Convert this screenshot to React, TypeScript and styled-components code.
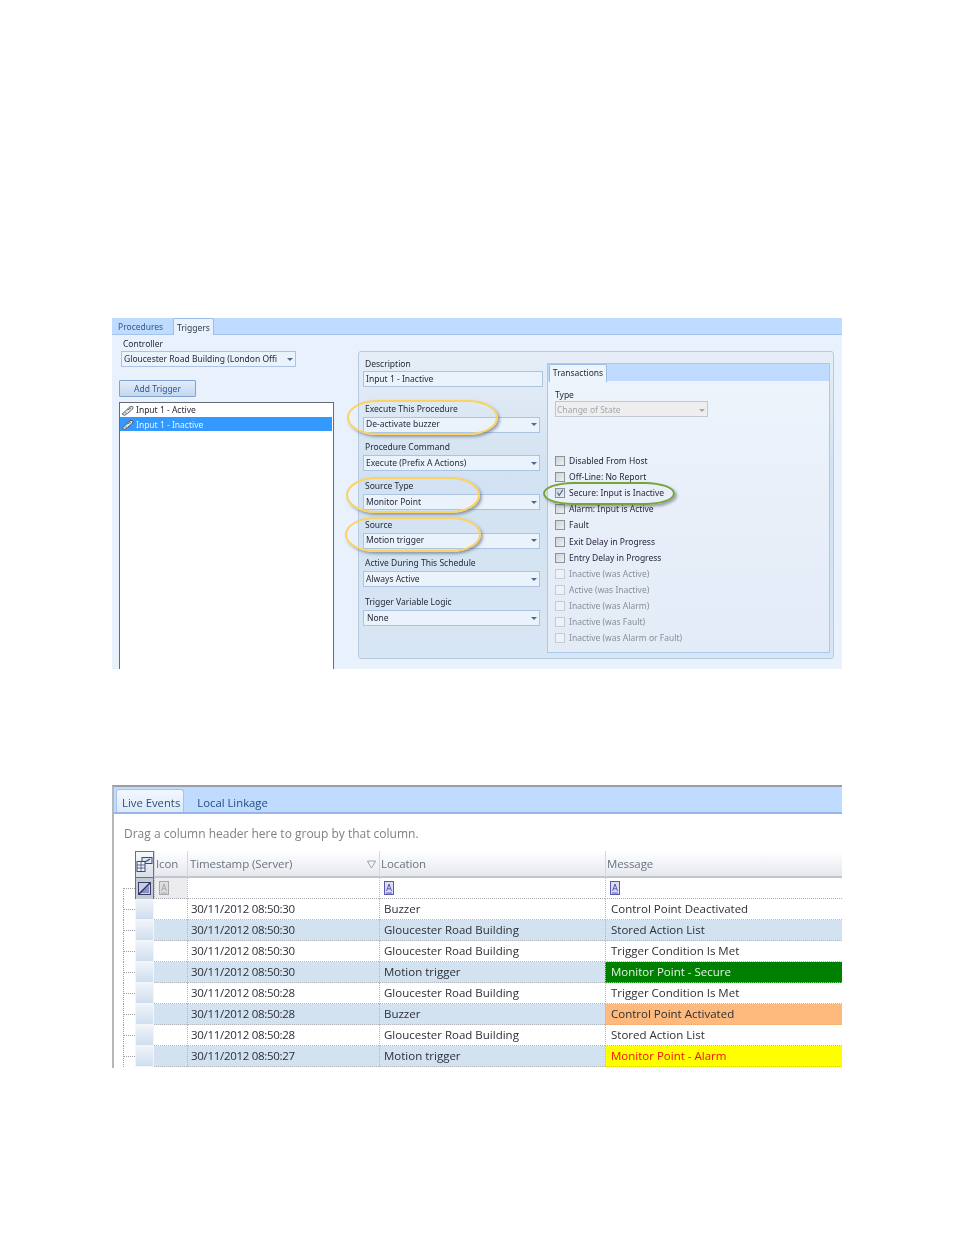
import React from 'react';
import styled, { createGlobalStyle } from 'styled-components';

const GlobalStyle = createGlobalStyle`
  html, body {
    margin: 0;
    background: #ffffff;
  }
`;

const Page = styled.div`
  width: 954px;
  height: 1235px;
  box-sizing: border-box;
  padding: 318px 0 0 112px;
  overflow: hidden;
`;

/* ---------- trigger editor ---------- */

const Editor = styled.section`
  position: relative;
  width: 730px;
  height: 351px;
  overflow: hidden;
  font: 8.5px/10px 'Noto Sans', 'DejaVu Sans', sans-serif;
  color: #1e2530;
  background: #e9f2fc;
  filter: blur(0.35px);
`;

const TabStrip = styled.div`
  display: flex;
  height: 17px;
  box-sizing: border-box;
  background: #bfdbff;
  border-bottom: 1px solid #a3c4ec;
`;

const TopTab = styled.div<{ $active?: boolean; $w: number }>`
  width: ${({ $w }) => $w}px;
  height: 17px;
  box-sizing: border-box;
  padding: 4px 0 0 ${({ $active }) => ($active ? '3px' : '6px')};
  color: ${({ $active }) => ($active ? '#2b3a4d' : '#2f5a8c')};
  background: ${({ $active }) => ($active ? '#e9f2fc' : 'transparent')};
  border: ${({ $active }) => ($active ? '1px solid #9dbde6' : 'none')};
  border-bottom: none;
  margin-left: ${({ $active }) => ($active ? '1px' : '0')};
  border-radius: 2px 2px 0 0;
`;

const EditorBody = styled.div`
  display: flex;
  height: 334px;
`;

const LeftColumn = styled.div`
  display: flex;
  flex-direction: column;
  width: 246px;
  flex: none;
  padding: 4px 0 0 7px;
  box-sizing: border-box;
`;

const ControllerLabel = styled.div`
  margin-left: 4px;
  height: 12px;
`;

const SelectBox = styled.div<{ $w?: number; $disabled?: boolean; $indent?: number }>`
  display: flex;
  align-items: center;
  justify-content: space-between;
  width: ${({ $w }) => ($w ? `${$w}px` : '100%')};
  height: 16px;
  box-sizing: border-box;
  padding: ${({ $disabled }) => ($disabled ? '1px' : '0')} 2px ${({ $disabled }) => ($disabled ? '0' : '1px')} ${({ $indent }) => $indent ?? 2}px;
  white-space: nowrap;
  overflow: hidden;
  background: ${({ $disabled }) => ($disabled ? '#eeeeee' : '#eaf2fc')};
  border: 1px solid ${({ $disabled }) => ($disabled ? '#c4c8cc' : '#acc4e2')};
  color: ${({ $disabled }) => ($disabled ? '#a4a8ac' : '#262b3a')};
`;

const Caret = styled.span<{ $disabled?: boolean }>`
  flex: none;
  width: 0;
  height: 0;
  margin: 1px 0 0 4px;
  border-left: 3px solid transparent;
  border-right: 3px solid transparent;
  border-top: 3px solid ${({ $disabled }) => ($disabled ? '#a8a8a8' : '#4a6a9a')};
`;

const ControllerSelect = styled(SelectBox)`
  margin-left: 2px;
`;

const AddButton = styled.div`
  width: 77px;
  height: 17px;
  box-sizing: border-box;
  margin-top: 13px;
  padding-top: 3px;
  text-align: center;
  color: #2d5a94;
  background: linear-gradient(#e2ecf8, #c3d7ef);
  border: 1px solid #7fa2cf;
  border-radius: 1px;
`;

const TriggerList = styled.div`
  flex: 1;
  width: 215px;
  margin-top: 5px;
  box-sizing: border-box;
  background: #ffffff;
  border: 1px solid #666c74;
  border-bottom: none;
`;

const TriggerRow = styled.div<{ $selected?: boolean }>`
  display: flex;
  align-items: center;
  gap: 2px;
  height: 14px;
  padding: ${({ $selected }) => ($selected ? '1px' : '0')} 0 0 1px;
  box-sizing: border-box;
  margin-right: 1px;
  background: ${({ $selected }) => ($selected ? '#3399ff' : 'transparent')};
  color: ${({ $selected }) => ($selected ? '#e8f2ff' : '#262b3a')};
`;

const GroupPanel = styled.div`
  display: flex;
  align-items: flex-start;
  width: 476px;
  height: 308px;
  margin-top: 16px;
  box-sizing: border-box;
  background: linear-gradient(#e6edf7, #d2e2f2 40%, #d8e6f4);
  border: 1px solid #b6cbe2;
  border-radius: 3px;
`;

const Fields = styled.div`
  width: 180px;
  flex: none;
  margin: 6px 0 0 4px;
  display: flex;
  flex-direction: column;
  gap: 8.7px;
`;

const Field = styled.div<{ $spaced?: boolean }>`
  margin-bottom: ${({ $spaced }) => ($spaced ? '7px' : '0')};
`;

const FieldLabel = styled.div`
  height: 12px;
  box-sizing: border-box;
  padding: 1px 0 0 2px;
`;

const DescriptionInput = styled(SelectBox)`
  margin-top: 1px;
`;

const FieldSelect = styled(SelectBox)`
  width: 177px;
  margin-top: 2px;
`;

const TransactionsPanel = styled.div`
  width: 283px;
  height: 290px;
  margin: 11px 0 0 4px;
  flex: none;
  box-sizing: border-box;
  background: linear-gradient(#eef4fc, #e3ebf7);
  border: 1px solid #a9c8ee;
`;

const InnerTabStrip = styled.div`
  height: 17px;
  background: #bfdbff;
  padding-left: 1px;
`;

const InnerTab = styled.div`
  width: 58px;
  height: 18px;
  box-sizing: border-box;
  padding-top: 3px;
  text-align: center;
  background: #eef4fc;
  border: 1px solid #9dbde6;
  border-bottom: none;
  border-radius: 2px 2px 0 0;
`;

const TransactionsBody = styled.div`
  padding: 8px 0 0 7px;
`;

const TypeLabel = styled.div`
  height: 12px;
  box-sizing: border-box;
  padding-top: 1px;
`;

const CheckList = styled.div`
  margin-top: 36px;
  display: grid;
  grid-auto-rows: 16.1px;
`;

const CheckRow = styled.div<{ $muted?: boolean }>`
  display: flex;
  align-items: center;
  gap: 4px;
  color: ${({ $muted }) => ($muted ? '#8a8e96' : '#231f36')};
`;

const CheckBox = styled.span<{ $muted?: boolean }>`
  flex: none;
  display: flex;
  width: 10px;
  height: 10px;
  box-sizing: border-box;
  background: ${({ $muted }) => ($muted ? '#eef1f6' : 'linear-gradient(135deg, #cfd2d6, #eef0f3)')};
  border: 1px solid ${({ $muted }) => ($muted ? '#c8ccd2' : '#8e9297')};
`;

const Oval = styled.div<{ $x: number; $y: number; $w: number; $h: number; $green?: boolean }>`
  position: absolute;
  left: ${({ $x }) => $x}px;
  top: ${({ $y }) => $y}px;
  width: ${({ $w }) => $w}px;
  height: ${({ $h }) => $h}px;
  box-sizing: border-box;
  border: 2px solid ${({ $green }) => ($green ? '#76a53a' : '#fbd364')};
  border-radius: 30px / 50%;
  box-shadow: 2px 2px 3px rgba(70, 80, 95, 0.5);
  pointer-events: none;
`;

/* ---------- live events ---------- */

const EventsPanel = styled.section`
  width: 730px;
  height: 283px;
  margin-top: 116px;
  box-sizing: border-box;
  overflow: hidden;
  font: 11.5px/16px 'Open Sans', 'Noto Sans', sans-serif;
  color: #33383f;
  background: #ffffff;
  border-top: 2px solid #9b9fa5;
  border-left: 2px solid #b4b7bb;
  filter: blur(0.35px);
`;

const EventsTabs = styled.div`
  display: flex;
  align-items: flex-end;
  height: 27px;
  box-sizing: border-box;
  padding-left: 2px;
  background: #bfdbff;
  border-bottom: 2px solid #95b8e8;
`;

const EventTab = styled.div<{ $active?: boolean }>`
  height: 23px;
  box-sizing: border-box;
  padding: 5px 3px 0 5px;
  margin-right: 7px;
  white-space: nowrap;
  font-size: 11.3px;
  color: ${({ $active }) => ($active ? '#2d4f74' : '#1f4d80')};
  background: ${({ $active }) => ($active ? 'linear-gradient(#f3f8ff, #dbe8f8)' : 'transparent')};
  border: ${({ $active }) => ($active ? '1px solid #a5c4ec' : '1px solid transparent')};
  border-bottom: none;
  border-radius: 3px 3px 0 0;
`;

const GroupHint = styled.div`
  height: 37px;
  box-sizing: border-box;
  padding: 12px 0 0 10px;
  font-size: 12px;
  color: #7e8186;
`;

const COLUMNS = '21px 19px 33px 192px 226px 1fr';

const HeaderRow = styled.div`
  display: grid;
  grid-template-columns: ${COLUMNS};
  height: 27px;
`;

const HeaderCell = styled.div<{ $spread?: boolean }>`
  display: flex;
  align-items: center;
  justify-content: ${({ $spread }) => ($spread ? 'space-between' : 'flex-start')};
  padding: 1px 3px 0 ${({ $spread }) => ($spread ? '2px' : '1px')};
  letter-spacing: -0.1px;
  color: #6a7480;
  background: linear-gradient(#ffffff, #e4e8ee);
  border-left: 1px solid #d4d8de;
  border-bottom: 2px solid #c2c6cc;
`;

const ChooserCell = styled.div`
  display: flex;
  align-items: center;
  justify-content: center;
  background: linear-gradient(#f6f8fb, #d8dfe8);
  border: 1px solid #6c7078;
`;

const FilterRow = styled.div`
  display: grid;
  grid-template-columns: ${COLUMNS};
  height: 21px;
`;

const FilterCell = styled.div<{ $tinted?: boolean }>`
  display: flex;
  align-items: center;
  padding-left: 4px;
  background: ${({ $tinted }) => ($tinted ? '#ececee' : 'transparent')};
  border-left: 1px dotted #b8bcc2;
  border-bottom: 1px dotted #a8acb2;
`;

const ClearCell = styled.div`
  display: flex;
  align-items: center;
  justify-content: center;
  background: #c6cbd3;
  border-left: 1px solid #6c7078;
  border-right: 1px solid #6c7078;
`;

const Gutter = styled.div<{ $first?: boolean }>`
  position: relative;
  margin-left: 9px;

  &::before {
    content: '';
    position: absolute;
    left: 0;
    top: ${({ $first }) => ($first ? '10px' : '0')};
    bottom: 0;
    border-left: 1px dotted #9a9ea4;
  }

  &::after {
    content: '';
    position: absolute;
    left: 0;
    right: 0;
    top: 10px;
    border-top: 1px dotted #9a9ea4;
  }
`;

const EventRow = styled.div`
  display: grid;
  grid-template-columns: ${COLUMNS};
  height: 21px;
`;

const RowHandle = styled.div`
  background: linear-gradient(#eef3f9, #cfdeee);
  border: 1px solid #f2f5f9;
`;

const IconCell = styled.div<{ $alt?: boolean }>`
  background: ${({ $alt }) => ($alt ? '#d3e2f1' : '#ffffff')};
  border-bottom: 1px dotted #b4b8be;
`;

const TextCell = styled.div<{ $alt?: boolean }>`
  padding: 2px 0 0 4px;
  white-space: nowrap;
  overflow: hidden;
  color: #2c2f36;
  background: ${({ $alt }) => ($alt ? '#d3e2f1' : '#ffffff')};
  border-left: 1px dotted #b4b8be;
  border-bottom: 1px dotted #b4b8be;
`;

const TimeCell = styled(TextCell)`
  padding-left: 3px;
  letter-spacing: -0.3px;
`;

const MessageCell = styled(TextCell)<{ $bg?: string; $fg?: string }>`
  padding-left: 5px;
  background: ${({ $bg, $alt }) => $bg ?? ($alt ? '#d3e2f1' : '#ffffff')};
  color: ${({ $fg }) => $fg ?? '#2c2f36'};
`;

/* ---------- drawn icons ---------- */

const LinkIcon = ({ light }: { light?: boolean }) => (
  <svg width="13" height="11" viewBox="0 0 13 11" fill="none">
    <path d="M1 9 L4 6.5 L6.5 8.5 L3.5 10.5 Z" fill="#c8ccd2" stroke="#55595f" strokeWidth="0.8" />
    <path d="M4 6.5 L8 2.5 C9.5 1 12.5 1 12 3 C11.5 4.5 9.5 6 6.5 8.5" fill={light ? '#dfe6f0' : '#e4e6e8'} stroke={light ? '#40464e' : '#5a5e64'} strokeWidth="1" />
    <path d="M6.5 5 L10 3" stroke="#50545a" strokeWidth="0.8" />
  </svg>
);

const ColumnChooserIcon = () => (
  <svg width="17" height="17" viewBox="0 0 17 17" fill="none">
    <rect x="6" y="1.5" width="10" height="6" fill="#dfe6f2" stroke="#3c4a78" />
    <rect x="1" y="5.5" width="8" height="10" fill="#f2f5fa" stroke="#3c4a78" />
    <path d="M1 9 H9 M1 12 H9 M5 6 V15" stroke="#3c4a78" strokeWidth="0.8" />
    <path d="M9 6 L14 3" stroke="#2f4c9c" strokeWidth="1.2" />
  </svg>
);

const ClearFilterIcon = () => (
  <svg width="13" height="13" viewBox="0 0 13 13" fill="none">
    <rect x="0.5" y="0.5" width="12" height="12" fill="#c9cbe8" stroke="#3a3f6a" />
    <path d="M2 11 L11 11 L11 4 Z" fill="#8b8fc4" />
    <path d="M0.5 12.5 L12.5 0.5" stroke="#2b2f5c" strokeWidth="1.4" />
  </svg>
);

const FilterTextIcon = ({ muted }: { muted?: boolean }) => {
  const ink = muted ? '#a8a8a8' : '#5a56b0';
  return (
    <svg width="10" height="14" viewBox="0 0 10 14" fill="none">
      <rect x="0.5" y="0.5" width="9" height="13" fill={muted ? '#dedee0' : '#dcdcf2'} stroke={ink} />
      <path d="M2.5 10 L5 3 L7.5 10 M3.4 7.8 H6.6 M2 12 H8" stroke={ink} />
    </svg>
  );
};

const FunnelIcon = () => (
  <svg width="9" height="9" viewBox="0 0 9 9" fill="none">
    <path d="M0.5 1 H8.5 L5 7.5 H4 Z" fill="#f4f5f7" stroke="#8a8e96" strokeWidth="0.8" />
  </svg>
);

const CheckMark = () => (
  <svg width="8" height="8" viewBox="0 0 8 8" fill="none">
    <path d="M1.5 3.5 L3.2 6.5 L6.8 0.8" stroke="#3d5f8f" strokeWidth="1.1" />
  </svg>
);

/* ---------- data ---------- */

const fields = [
  { label: 'Execute This Procedure', value: 'De-activate buzzer' },
  { label: 'Procedure Command', value: 'Execute (Prefix A Actions)' },
  { label: 'Source Type', value: 'Monitor Point' },
  { label: 'Source', value: 'Motion trigger' },
  { label: 'Active During This Schedule', value: 'Always Active' },
  { label: 'Trigger Variable Logic', value: 'None', indent: 3 },
];

const checks = [
  { label: 'Disabled From Host' },
  { label: 'Off-Line: No Report' },
  { label: 'Secure: Input is Inactive', checked: true },
  { label: 'Alarm: Input is Active' },
  { label: 'Fault' },
  { label: 'Exit Delay in Progress' },
  { label: 'Entry Delay in Progress' },
  { label: 'Inactive (was Active)', muted: true },
  { label: 'Active (was Inactive)', muted: true },
  { label: 'Inactive (was Alarm)', muted: true },
  { label: 'Inactive (was Fault)', muted: true },
  { label: 'Inactive (was Alarm or Fault)', muted: true },
];

const events: { time: string; location: string; message: string; bg?: string; fg?: string }[] = [
  { time: '30/11/2012 08:50:30', location: 'Buzzer', message: 'Control Point Deactivated' },
  { time: '30/11/2012 08:50:30', location: 'Gloucester Road Building', message: 'Stored Action List' },
  { time: '30/11/2012 08:50:30', location: 'Gloucester Road Building', message: 'Trigger Condition Is Met' },
  { time: '30/11/2012 08:50:30', location: 'Motion trigger', message: 'Monitor Point - Secure', bg: '#008000', fg: '#e6f2e6' },
  { time: '30/11/2012 08:50:28', location: 'Gloucester Road Building', message: 'Trigger Condition Is Met' },
  { time: '30/11/2012 08:50:28', location: 'Buzzer', message: 'Control Point Activated', bg: '#fdba7c' },
  { time: '30/11/2012 08:50:28', location: 'Gloucester Road Building', message: 'Stored Action List' },
  { time: '30/11/2012 08:50:27', location: 'Motion trigger', message: 'Monitor Point - Alarm', bg: '#ffff00', fg: '#f01010' },
];

export default function App() {
  return (
    <Page>
      <GlobalStyle />
      <Editor>
        <TabStrip>
          <TopTab $w={60}>Procedures</TopTab>
          <TopTab $active $w={41}>Triggers</TopTab>
        </TabStrip>
        <EditorBody>
          <LeftColumn>
            <ControllerLabel>Controller</ControllerLabel>
            <ControllerSelect $w={175}>
              Gloucester Road Building (London Offi
              <Caret />
            </ControllerSelect>
            <AddButton>Add Trigger</AddButton>
            <TriggerList>
              <TriggerRow>
                <LinkIcon />
                Input 1 - Active
              </TriggerRow>
              <TriggerRow $selected>
                <LinkIcon light />
                Input 1 - Inactive
              </TriggerRow>
            </TriggerList>
          </LeftColumn>
          <GroupPanel>
            <Fields>
              <Field $spaced>
                <FieldLabel>Description</FieldLabel>
                <DescriptionInput>Input 1 - Inactive</DescriptionInput>
              </Field>
              {fields.map((f) => (
                <Field key={f.label}>
                  <FieldLabel>{f.label}</FieldLabel>
                  <FieldSelect $indent={f.indent}>
                    {f.value}
                    <Caret />
                  </FieldSelect>
                </Field>
              ))}
            </Fields>
            <TransactionsPanel>
              <InnerTabStrip>
                <InnerTab>Transactions</InnerTab>
              </InnerTabStrip>
              <TransactionsBody>
                <TypeLabel>Type</TypeLabel>
                <SelectBox $w={153} $disabled $indent={1}>
                  Change of State
                  <Caret $disabled />
                </SelectBox>
                <CheckList>
                  {checks.map((c) => (
                    <CheckRow key={c.label} $muted={c.muted}>
                      <CheckBox $muted={c.muted}>{c.checked && <CheckMark />}</CheckBox>
                      <span>{c.label}</span>
                    </CheckRow>
                  ))}
                </CheckList>
              </TransactionsBody>
            </TransactionsPanel>
          </GroupPanel>
        </EditorBody>
        <Oval $x={235} $y={82} $w={151} $h={35} />
        <Oval $x={234} $y={159} $w={134} $h={36} />
        <Oval $x={233} $y={199} $w={136} $h={35} />
        <Oval $x={431} $y={164} $w={132} $h={23} $green />
      </Editor>

      <EventsPanel>
        <EventsTabs>
          <EventTab $active>Live Events</EventTab>
          <EventTab>Local Linkage</EventTab>
        </EventsTabs>
        <GroupHint>Drag a column header here to group by that column.</GroupHint>
        <HeaderRow>
          <div />
          <ChooserCell>
            <ColumnChooserIcon />
          </ChooserCell>
          <HeaderCell>Icon</HeaderCell>
          <HeaderCell $spread>
            Timestamp (Server)
            <FunnelIcon />
          </HeaderCell>
          <HeaderCell>Location</HeaderCell>
          <HeaderCell>Message</HeaderCell>
        </HeaderRow>
        <FilterRow>
          <Gutter $first />
          <ClearCell>
            <ClearFilterIcon />
          </ClearCell>
          <FilterCell $tinted>
            <FilterTextIcon muted />
          </FilterCell>
          <FilterCell />
          <FilterCell>
            <FilterTextIcon />
          </FilterCell>
          <FilterCell>
            <FilterTextIcon />
          </FilterCell>
        </FilterRow>
        {events.map((e, i) => {
          const alt = i % 2 === 1;
          return (
            <EventRow key={i}>
              <Gutter />
              <RowHandle />
              <IconCell $alt={alt} />
              <TimeCell $alt={alt}>{e.time}</TimeCell>
              <TextCell $alt={alt}>{e.location}</TextCell>
              <MessageCell $alt={alt} $bg={e.bg} $fg={e.fg}>
                {e.message}
              </MessageCell>
            </EventRow>
          );
        })}
      </EventsPanel>
    </Page>
  );
}
